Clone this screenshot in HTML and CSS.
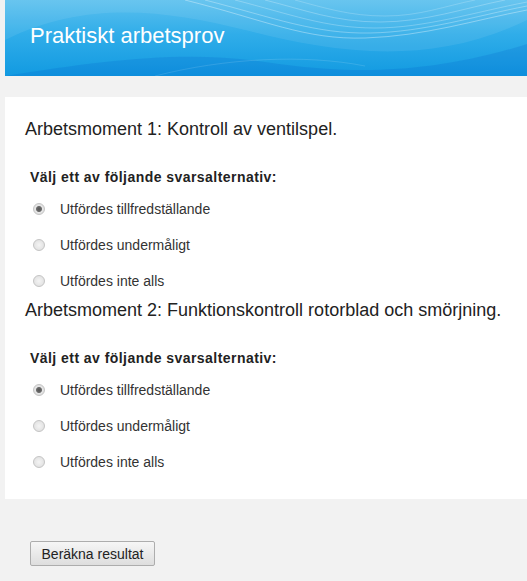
FILE: index.html
```html
<!DOCTYPE html>
<html lang="sv">
<head>
    <meta charset="UTF-8">
    <meta name="viewport" content="width=device-width, initial-scale=1.0">
    <title>Praktiskt arbetsprov</title>
    <link rel="stylesheet" href="styles.css">
</head>
<body>

    <header class="banner">
        <svg class="waves" viewBox="0 0 522 76" preserveAspectRatio="none">
            <path d="M0 40 C 80 0, 160 10, 240 30 S 420 70, 522 20 L 522 0 L 0 0 Z" fill="rgba(255,255,255,0.08)"/>
            <path d="M180 0 C 260 20, 300 40, 360 38 S 470 20, 522 10" stroke="rgba(255,255,255,0.35)" fill="none"/>
            <path d="M200 0 C 270 18, 310 34, 365 33 S 470 16, 522 6" stroke="rgba(255,255,255,0.3)" fill="none"/>
            <path d="M230 0 C 285 14, 320 28, 370 28 S 470 12, 522 2" stroke="rgba(255,255,255,0.25)" fill="none"/>
            <path d="M260 0 C 300 10, 330 22, 375 22 S 460 8, 500 0" stroke="rgba(255,255,255,0.25)" fill="none"/>
            <path d="M290 0 C 320 8, 345 16, 380 16 S 440 6, 470 0" stroke="rgba(255,255,255,0.2)" fill="none"/>
            <path d="M0 76 C 100 60, 180 50, 260 62 S 420 76, 522 44 L 522 76 Z" fill="rgba(0,90,200,0.18)"/>
            <path d="M150 76 C 220 58, 300 54, 360 66" stroke="rgba(255,255,255,0.12)" fill="none"/>
        </svg>
        <h1>Praktiskt arbetsprov</h1>
    </header>

    <form class="panel">
        <section class="task">
            <h2>Arbetsmoment 1: Kontroll av ventilspel.</h2>
            <p class="question">Välj ett av följande svarsalternativ:</p>
            <label class="option"><input type="radio" name="m1" checked> Utfördes tillfredställande</label>
            <label class="option"><input type="radio" name="m1"> Utfördes undermåligt</label>
            <label class="option"><input type="radio" name="m1"> Utfördes inte alls</label>
        </section>

        <section class="task">
            <h2>Arbetsmoment 2: Funktionskontroll rotorblad och smörjning.</h2>
            <p class="question">Välj ett av följande svarsalternativ:</p>
            <label class="option"><input type="radio" name="m2" checked> Utfördes tillfredställande</label>
            <label class="option"><input type="radio" name="m2"> Utfördes undermåligt</label>
            <label class="option"><input type="radio" name="m2"> Utfördes inte alls</label>
        </section>
    </form>

    <div class="actions">
        <button type="button" class="calc-button">Beräkna resultat</button>
    </div>

</body>
</html>
```

FILE: styles.css
```css
body {
    font-family: "Liberation Sans", Arial, sans-serif;
    margin: 0;
    padding: 0 0 0 5px;
    background-color: #f2f2f2;
    color: #333;
}

.banner {
    position: relative;
    height: 76px;
    background: linear-gradient(to bottom, #5cc0ee 0%, #30ade9 45%, #129ae1 100%);
    overflow: hidden;
}

.waves {
    position: absolute;
    top: 0;
    left: 0;
    width: 100%;
    height: 100%;
}

.banner h1 {
    position: relative;
    margin: 0;
    padding: 23px 0 0 25px;
    font-size: 22px;
    font-weight: normal;
    color: white;
}

.panel {
    background: white;
    margin-top: 21px;
    padding: 13px 0 19px 20px;
}

.task h2 {
    margin: 0;
    padding: 9px 0 0 0;
    font-size: 18px;
    font-weight: normal;
    line-height: 20px;
    color: #222;
}

.task + .task h2 {
    padding-top: 1px;
}

.question {
    margin: 30px 0 6px 5px;
    font-size: 14px;
    font-weight: bold;
    letter-spacing: 0.45px;
    color: #222;
}

.option {
    display: flex;
    align-items: center;
    height: 36px;
    padding-left: 8px;
    font-size: 14px;
    color: #333;
}

.option input {
    appearance: none;
    -webkit-appearance: none;
    width: 12px;
    height: 12px;
    margin: 0 15px 0 0;
    border: 1px solid #c4c4c4;
    border-radius: 50%;
    background: radial-gradient(circle, #f4f4f4 0%, #dcdcdc 100%);
}

.option input:checked {
    background: radial-gradient(circle, #555 0, #6a6a6a 2.5px, #e6e6e6 3.5px, #d8d8d8 100%);
}

.actions {
    padding: 42px 0 0 25px;
}

.calc-button {
    font-family: "Liberation Sans", Arial, sans-serif;
    font-size: 14px;
    color: #222;
    width: 125px;
    height: 25px;
    padding: 0 10px;
    border: 1px solid #adadad;
    border-radius: 2px;
    background: linear-gradient(to bottom, #f6f6f6, #dedede);
}
```
